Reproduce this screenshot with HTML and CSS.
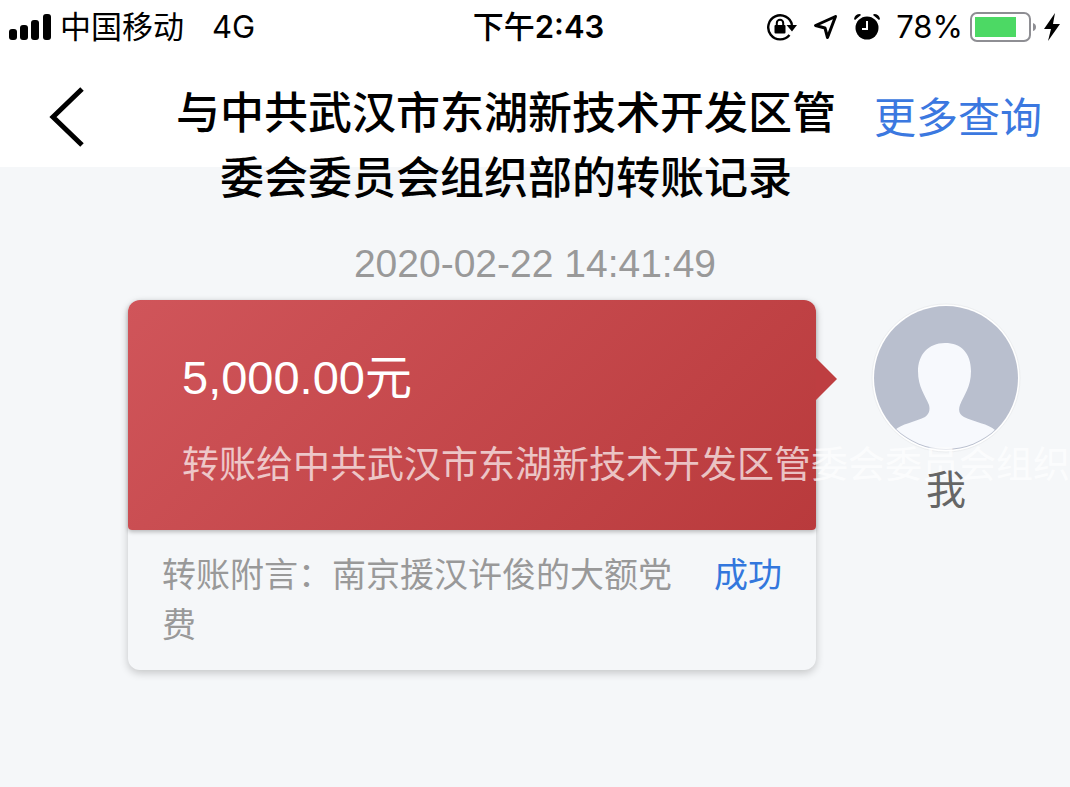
FILE: index.html
```html
<!DOCTYPE html>
<html lang="zh-CN">
<head>
    <meta charset="utf-8">
    <meta name="viewport" content="width=device-width, initial-scale=1">
    <title>转账记录</title>
    <link rel="stylesheet" href="styles.css">
</head>
<body>
    <div class="statusbar">
        <div class="status-left">
            <svg class="signal" width="42" height="27" viewBox="0 0 42 27">
                <rect x="0" y="15" width="8" height="11" rx="3"/>
                <rect x="11" y="11" width="8" height="15" rx="3"/>
                <rect x="22" y="6" width="8" height="20" rx="3"/>
                <rect x="34" y="0" width="8" height="26" rx="3"/>
            </svg>
            <span class="carrier">中国移动</span>
            <span class="network">4G</span>
        </div>
        <div class="status-time">下午<b>2:43</b></div>
        <div class="status-right">
            <!-- rotation lock -->
            <svg width="30" height="28" viewBox="0 0 30 28">
                <path d="M25 12A12 12 0 1 0 22.5 22" fill="none" stroke="#000" stroke-width="2.4"/>
                <path d="M19.5 12H30l-5 6.5z"/>
                <rect x="7.5" y="12" width="11" height="8.500" rx="1"/>
                <path d="M9.800 13v-3a3.200 3.200 0 0 1 6.400 0v3" fill="none" stroke="#000" stroke-width="2"/>
            </svg>
            <!-- location -->
            <svg width="25" height="26" viewBox="0 0 25 26">
                <path d="M22.500 2.500L2.500 11.500l9.500 2.500 2.500 9.500z" fill="none" stroke="#000" stroke-width="3" stroke-linejoin="round"/>
            </svg>
            <!-- alarm -->
            <svg width="26" height="26" viewBox="0 0 26 26">
                <circle cx="13" cy="14" r="11.500"/>
                <path d="M0 5Q1 0 6 0L7 1 1 6zM26 5Q25 0 20 0L19 1 25 6z"/>
                <path d="M13 7v8H8" fill="none" stroke="#fff" stroke-width="2"/>
            </svg>
            <span class="percent">78%</span>
            <svg class="battery" width="67" height="30" viewBox="0 0 67 30">
                <rect x="1" y="1" width="59" height="28" rx="6" fill="#fff" stroke="#8e8e93" stroke-width="2"/>
                <rect x="5" y="5" width="41" height="20" fill="#4cd964"/>
                <path d="M63 11q3 1 3 4t-3 4z" fill="#8e8e93"/>
            </svg>
            <svg class="bolt" width="16" height="28" viewBox="0 0 16 28">
                <path d="M11 0L0 16h7L4 28 16 11H9z"/>
            </svg>
        </div>
    </div>

    <header class="navbar">
        <button class="back" type="button" aria-label="返回">
            <svg width="36" height="60" viewBox="0 0 36 60">
                <path d="M34 2L5 30l29 28" fill="none" stroke="#000" stroke-width="5"/>
            </svg>
        </button>
        <h1 class="title">与中共武汉市东湖新技术开发区管委会委员会组织部的转账记录</h1>
        <a class="more" href="#">更多查询</a>
    </header>

    <main class="content">
        <time class="date" datetime="2020-02-22T14:41:49">2020-02-22 14:41:49</time>
        <div class="record">
            <div class="card">
                <div class="card-top">
                    <p class="amount">5,000.00元</p>
                    <p class="payee">转账给中共武汉市东湖新技术开发区管委会委员会组织部</p>
                </div>
                <div class="card-bottom">
                    <p class="memo">转账附言：南京援汉许俊的大额党费</p>
                    <span class="state">成功</span>
                </div>
            </div>
            <div class="user">
                <svg class="avatar" width="150" height="150" viewBox="0 0 150 150">
                    <defs>
                        <clipPath id="round"><circle cx="75" cy="74" r="72"/></clipPath>
                    </defs>
                    <circle cx="75" cy="75" r="74" fill="#fff" stroke="#eceef0"/>
                    <circle cx="75" cy="75" r="72" fill="#b9bfce"/>
                    <path clip-path="url(#round)" fill="#f7f9fd" d="M74 40C57 40 47 52 47 68C47 84 54 92 58 102Q60 110 54 114C44 119 30 121 24 127L34 150H116L124 127C118 121 103 119 93 114Q86 110 89 102C93 92 100 84 100 68C100 50 90 40 74 40Z"/>
                </svg>
                <span class="name">我</span>
            </div>
        </div>
    </main>
</body>
</html>
```
FILE: styles.css
```css
* {
    box-sizing: border-box;
}
body {
    margin: 0;
    min-height: 100vh;
    background-color: #f5f7f9;
    font-family: "Liberation Sans", "Noto Sans CJK SC", sans-serif;
    color: #000;
    overflow-x: hidden;
}
h1, p {
    margin: 0;
    font-weight: normal;
}

/* status bar */
.statusbar {
    display: grid;
    grid-template-columns: 1fr auto 1fr;
    align-items: center;
    height: 54px;
    padding: 0 10px 0 9px;
    background-color: #fff;
    font-family: Inter, "Noto Sans CJK SC", sans-serif;
    font-size: 31px;
    line-height: 54px;
}
.status-left,
.status-right {
    display: flex;
    align-items: center;
}
.carrier {
    margin-left: 9px;
}
.network {
    margin-left: 28px;
}
.status-time {
    padding-left: 8px;
    font-weight: 500;
}
.status-time b {
    font-weight: 600;
}
.status-right {
    justify-content: flex-end;
    gap: 16px;
}
.percent {
    margin-right: -9px;
}
.bolt {
    margin-left: -9px;
}

/* nav bar, the long title runs out of the bottom */
.navbar {
    display: flex;
    align-items: flex-start;
    height: 113px;
    padding: 27px 28px 0 48px;
    background-color: #fff;
}
.back {
    padding: 6px 0 0;
    border: none;
    background: none;
    line-height: 0;
    cursor: pointer;
}
.title {
    flex: 1;
    padding: 0 34px 0 88px;
    font-size: 44px;
    font-weight: 500;
    line-height: 65px;
    text-align: center;
}
.more {
    padding-top: 8px;
    font-size: 42px;
    line-height: 60px;
    color: #3b78e0;
    text-decoration: none;
    white-space: nowrap;
}

/* transfer record */
.content {
    padding: 72px 0 40px;
}
.date {
    display: block;
    font-size: 39px;
    line-height: 50px;
    text-align: center;
    color: #999;
}
.record {
    display: flex;
    gap: 55px;
    padding: 11px 49px 0 128px;
}
.card {
    flex: 1;
    min-width: 0;
    border-radius: 12px;
    box-shadow: 0 3px 8px rgba(0, 0, 0, 0.2);
}
.card-top {
    position: relative;
    z-index: 1;
    height: 230px;
    padding: 48px 54px 0;
    border-radius: 12px 12px 4px 4px;
    background: linear-gradient(135deg, #d0555a, #b93a3c);
    box-shadow: 0 2px 4px rgba(0, 0, 0, 0.25);
    color: #fff;
}
/* arrow pointing at the avatar */
.card-top::after {
    content: "";
    position: absolute;
    top: 58px;
    left: 100%;
    border: 21px solid transparent;
    border-left-color: #be3e41;
    border-right: none;
}
.amount {
    font-size: 47px;
    line-height: 60px;
}
.payee {
    margin-top: 30px;
    font-size: 37px;
    line-height: 56px;
    color: rgba(255, 255, 255, 0.7);
    white-space: nowrap;
}
.card-bottom {
    display: flex;
    align-items: flex-start;
    justify-content: space-between;
    gap: 40px;
    padding: 20px 34px;
    font-size: 34px;
    line-height: 50px;
}
.memo {
    color: #999;
}
.state {
    color: #3377dd;
    white-space: nowrap;
}
.user {
    display: flex;
    flex: 0 0 150px;
    flex-direction: column;
    align-items: center;
    padding-top: 3px;
}
.name {
    position: relative;
    z-index: 2;
    margin-top: 7px;
    font-size: 40px;
    line-height: 60px;
    color: #666;
}
```
